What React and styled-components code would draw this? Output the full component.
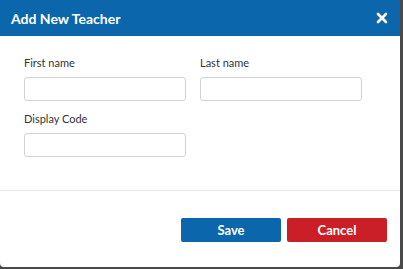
import React from 'react';
import styled, { createGlobalStyle } from 'styled-components';

const GlobalStyle = createGlobalStyle`
  html, body {
    margin: 0;
    padding: 0;
    background: #4a4a4a;
    font-family: Lato, "Open Sans", sans-serif;
  }
`;

const blue = '#0b66ab';
const red = '#ca1f26';

const Modal = styled.div`
  width: 400px;
  height: 267px;
  background: white;
  border-radius: 0 0 4px 4px;
  display: flex;
  flex-direction: column;
  overflow: hidden;
`;

const Header = styled.div`
  height: 36px;
  background: ${blue};
  display: flex;
  align-items: center;
  justify-content: space-between;
  padding: 0 12px 0 11px;
  color: white;

  h1 {
    margin: 0;
    font-size: 14px;
    font-weight: bold;
  }
`;

const Close = styled.button`
  border: none;
  background: none;
  padding: 0;
  width: 12px;
  height: 12px;
  display: flex;
  cursor: pointer;
`;

const Body = styled.div`
  padding: 20px 24px 33px;
  border-bottom: 1px solid #e8e8e8;
  display: grid;
  grid-template-columns: 162px 162px;
  column-gap: 14px;
  row-gap: 11px;
`;

const Field = styled.label`
  display: flex;
  flex-direction: column;
  gap: 7px;
  font-size: 11px;
  line-height: 14px;
  color: #333;
`;

const Input = styled.input`
  box-sizing: border-box;
  width: 162px;
  height: 24px;
  border: 1px solid #d2d2d2;
  border-radius: 3px;
  background: white;
`;

const Footer = styled.div`
  flex: 1;
  display: flex;
  justify-content: flex-end;
  align-items: flex-start;
  gap: 6px;
  padding: 27px 13px 0 0;
`;

const Button = styled.button`
  width: 100px;
  height: 24px;
  border: none;
  border-radius: 2px;
  background: ${(p) => p.color};
  color: white;
  font-family: Lato, sans-serif;
  font-size: 13px;
  font-weight: bold;
`;

export default function App() {
  return (
    <>
      <GlobalStyle />
      <Modal>
        <Header>
          <h1>Add New Teacher</h1>
          <Close aria-label='close'>
            <svg width='12' height='12' viewBox='0 0 12 12'>
              <path
                d='M2 2 L10 10 M10 2 L2 10'
                stroke='white'
                strokeWidth='2.6'
                strokeLinecap='round'
              />
            </svg>
          </Close>
        </Header>
        <Body>
          <Field>
            First name
            <Input />
          </Field>
          <Field>
            Last name
            <Input />
          </Field>
          <Field>
            Display Code
            <Input />
          </Field>
        </Body>
        <Footer>
          <Button color={blue}>Save</Button>
          <Button color={red}>Cancel</Button>
        </Footer>
      </Modal>
    </>
  );
}
